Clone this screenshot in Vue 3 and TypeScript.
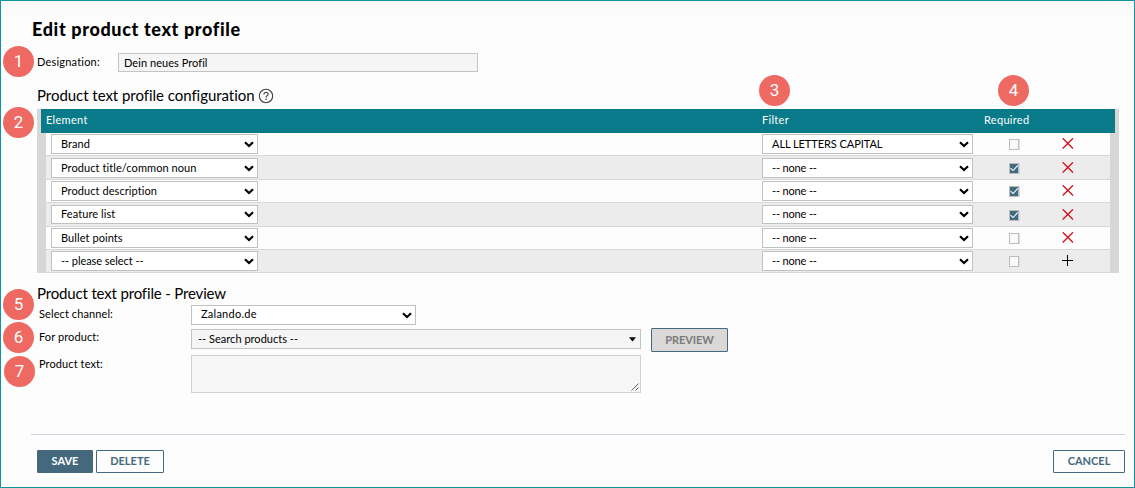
<script setup lang="ts">
import { ref } from 'vue'

interface Row {
  element: string
  filter: string
  required: boolean
  isNew?: boolean
}

const rows = ref<Row[]>([
  { element: 'Brand', filter: 'ALL LETTERS CAPITAL', required: false },
  { element: 'Product title/common noun', filter: '-- none --', required: true },
  { element: 'Product description', filter: '-- none --', required: true },
  { element: 'Feature list', filter: '-- none --', required: true },
  { element: 'Bullet points', filter: '-- none --', required: false },
  { element: '-- please select --', filter: '-- none --', required: false, isNew: true },
])

const designation = ref('Dein neues Profil')
const productText = ref('')
</script>

<template>
  <main class="page">
    <div class="strip"></div>
    <h1>Edit product text profile</h1>
    <div class="designation">
      <label for="designation">Designation:</label>
      <input id="designation" v-model="designation" />
    </div>

    <h2 class="config-title">
      <span>Product text profile configuration</span>
      <svg class="help" width="16" height="16" viewBox="0 0 16 16">
        <circle cx="8" cy="8" r="6.7" fill="none" stroke="#444" stroke-width="1.1" />
        <path d="M5.9 6.4C5.9 3.6 10.2 3.8 10.1 6.3C10.1 7.8 8.1 7.8 8.1 9.4" fill="none" stroke="#444" stroke-width="1.2" />
        <rect x="7.4" y="10.5" width="1.3" height="1.4" fill="#444" />
      </svg>
    </h2>

    <section class="table">
      <div class="grid head">
        <span>Element</span>
        <span>Filter</span>
        <span>Required</span>
      </div>
      <div class="body">
        <div v-for="(row, i) in rows" :key="i" class="grid row">
          <div class="select" :class="{ dashes: row.isNew }">
            <span>{{ row.element }}</span>
            <svg class="chev" width="10" height="7" viewBox="0 0 10 7"><path d="M1 1.3L5 5L9 1.3" /></svg>
          </div>
          <div class="select filter" :class="{ caps: row.filter.startsWith('ALL') }">
            <span>{{ row.filter }}</span>
            <svg class="chev" width="10" height="7" viewBox="0 0 10 7"><path d="M1 1.3L5 5L9 1.3" /></svg>
          </div>
          <div class="check" :class="{ on: row.required }">
            <svg v-if="row.required" width="9" height="9" viewBox="0 0 9 9"><path d="M.6 4L3.5 6.8L8.8 1" fill="none" stroke="#fff" stroke-width="1.2" /></svg>
          </div>
          <svg v-if="row.isNew" class="action" width="12" height="12" viewBox="0 0 12 12"><path d="M5.5 0V11M0 5.5H11" stroke="#000" stroke-width="1" /></svg>
          <svg v-else class="action" width="12" height="12" viewBox="0 0 12 12"><path d="M.7 .3L11 10.6M11 .3L.7 10.6" stroke="#d5161c" stroke-width="1.4" /></svg>
        </div>
      </div>
    </section>

    <h2 class="preview-title"><span>Product text profile - Preview</span></h2>
    <section class="preview">
      <span class="label">Select channel:</span>
      <div class="select channel">
        <span>Zalando.de</span>
        <svg class="chev" width="10" height="7" viewBox="0 0 10 7"><path d="M1 1.3L5 5L9 1.3" /></svg>
      </div>
      <span class="label">For product:</span>
      <div class="product">
        <div class="combo">
          <span>-- Search products --</span>
          <svg width="7" height="5" viewBox="0 0 7 5"><path d="M0 .3H7L3.5 4.5Z" /></svg>
        </div>
        <button class="btn disabled"><span>PREVIEW</span></button>
      </div>
      <span class="label text-label">Product text:</span>
      <div class="textarea">
        <textarea v-model="productText"></textarea>
        <svg class="grip" width="8" height="8" viewBox="0 0 8 8"><path d="M.5 7.5L7.5 .5M4.5 7.5L7.5 4.5" fill="none" stroke="#555" stroke-width=".9" /></svg>
      </div>
    </section>

    <footer>
      <button class="btn save"><span>SAVE</span></button>
      <button class="btn delete"><span>DELETE</span></button>
      <button class="btn cancel"><span>CANCEL</span></button>
    </footer>

    <span class="badge b1">1</span>
    <span class="badge b2">2</span>
    <span class="badge b3">3</span>
    <span class="badge b4">4</span>
    <span class="badge b5">5</span>
    <span class="badge b6">6</span>
    <span class="badge b7">7</span>
  </main>
</template>

<style>
body { margin: 0; overflow: hidden; }
</style>

<style scoped>
* { box-sizing: border-box; }
.page {
  position: relative;
  display: flex;
  flex-direction: column;
  width: 1135px;
  height: 488px;
  border: 1px solid #0d95a4;
  background: #fdfdfd;
  color: #000;
  font: 11px/14px Lato, "Liberation Sans", sans-serif;
  white-space: nowrap;
}
.strip { height: 14px; background: #fafafa; }
h1 { margin: 2px 0 0 31px; height: 24px; font-size: 18px; line-height: 24px; font-weight: 900; letter-spacing: .64px; }
.designation { display: flex; height: 19px; margin: 12px 0 0 36px; }
.designation label { width: 81px; line-height: 18px; letter-spacing: .2px; }
.designation input {
  width: 360px; height: 19px; padding: 0 5px 1px; border: 1px solid #c3c3c3; border-radius: 0;
  background: #f5f5f5; color: #000; font: inherit; letter-spacing: .05px; outline: none;
}
h2 { display: flex; margin: 0 0 0 36px; height: 20px; font-size: 15px; line-height: 20px; font-weight: 400; }
.config-title { margin-top: 13px; height: 24px; letter-spacing: -.04px; }
.help { margin: 3px 0 0 3px; }
.table { width: 1082px; height: 164px; margin-left: 36px; background: #d8d7d5; flex: none; }
.grid { display: grid; grid-template-columns: 711px 247px 54px 1fr; }
.head { width: 1074px; height: 24px; margin-left: 4px; padding-left: 5px; background: #087a89; color: #fff; line-height: 22px; grid-template-columns: 716px 222px 1fr; }
.head span { letter-spacing: .3px; }
.body { width: 1064px; margin-left: 9px; }
.row { height: 23px; padding: 1px 0 0 5px; border-bottom: 1px solid #d8d8d8; background: #fdfdfd; align-items: start; }
.row:nth-child(even) { background: #ececec; }
.row:nth-child(2), .row:nth-child(4) { height: 24px; padding-top: 2px; }
.select {
  display: flex; justify-content: space-between; align-items: center; width: 207px; height: 20px;
  padding: 0 3px 0 9px; border: 1px solid #c1c1bf; background: #fff; letter-spacing: .08px;
}
.select span { line-height: 18px; }
.filter { width: 211px; letter-spacing: -.15px; }
.dashes, .caps { letter-spacing: -.06px; }
.row:nth-child(4) .select { height: 19px; }
.row:nth-child(2) .select span, .row:nth-child(4) .select span { line-height: 16px; padding-bottom: 1px; }
.chev path { fill: none; stroke: #000; stroke-width: 2.2; }
.check { display: flex; align-items: center; justify-content: center; width: 10px; height: 11px; margin-top: 5px; border: 1px solid #bdbdb9; background: #f8f9fb; box-shadow: 1px 0 #dedede; }
.check.on { border-color: #bcbcb8; background: #416b80; box-shadow: 1px 0 #c9dff0; }
.action { margin: 4px 0 0 -1px; }
.preview-title { margin-top: 10px; letter-spacing: -.16px; }
.preview { display: grid; grid-template-columns: 152px 1fr; grid-template-rows: 23px 26px 39px; margin: 2px 0 0 38px; }
.label { line-height: 18px; letter-spacing: .1px; }
.text-label { line-height: 19px; }
.channel { width: 225px; letter-spacing: .25px; }
.channel span { line-height: 16px; padding-bottom: 2px; }
.product { display: flex; }
.combo { display: flex; width: 450px; height: 20px; margin-top: 1px; padding: 0 4px 0 6px; border: 1px solid #c3c3c3; background: #f5f5f5; align-items: center; justify-content: space-between; letter-spacing: .02px; }
.textarea { position: relative; width: 450px; height: 38px; margin-top: 1px; }
textarea { display: block; width: 100%; height: 100%; border: 1px solid #d0d0d0; background: #f6f6f6; resize: none; outline: none; }
.grip { position: absolute; right: 2px; bottom: 2px; }
.btn { display: flex; align-items: center; justify-content: center; height: 23px; padding: 0 0 2px; border: 1px solid #44697d; border-radius: 1px; background: #fdfdfd; color: #44697d; font: 700 11px/19px Lato, "Liberation Sans", sans-serif; }
.disabled { width: 77px; height: 24px; margin-left: 10px; background: #d9d8d7; color: #7b7b7b; letter-spacing: -.1px; }
footer { display: flex; margin: auto 9px 14px 30px; height: 39px; padding: 15px 0 0 6px; border-top: 1px solid #c9d3de; }
.save { width: 56px; background: #44697d; color: #fff; }
.delete { width: 68px; margin-left: 3px; }
.cancel { width: 72px; margin-left: auto; }
.badge {
  position: absolute; width: 31px; height: 31px; border-radius: 50%; background: #ee6962; color: #fff;
  font: 400 17px/31px Roboto, sans-serif; text-align: center;
}
.b1 { left: 2px; top: 45px; }
.b2 { left: 2px; top: 106px; }
.b3 { left: 758px; top: 74px; }
.b4 { left: 997px; top: 74px; }
.b5 { left: 2px; top: 288px; }
.b6 { left: 2px; top: 321px; }
.b7 { left: 3px; top: 355px; }
</style>
